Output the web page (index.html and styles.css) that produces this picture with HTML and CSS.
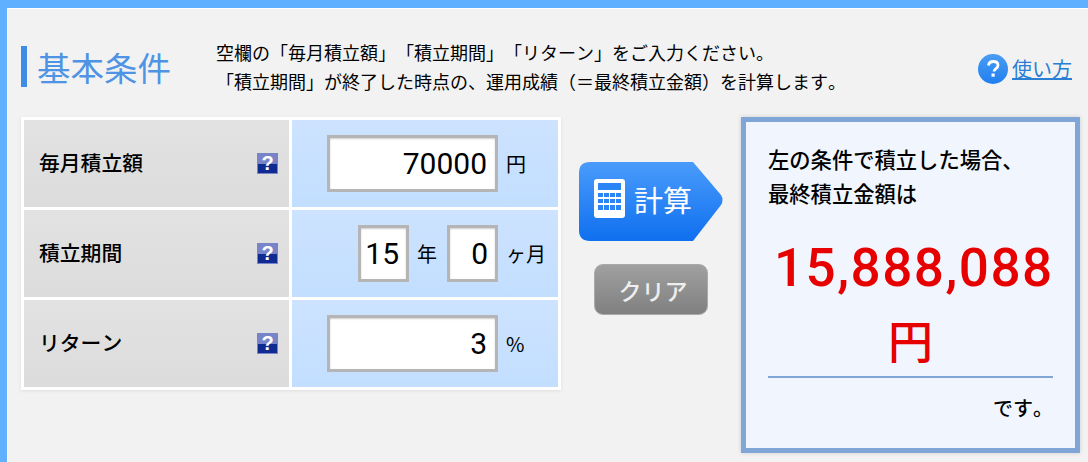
FILE: index.html
```html
<!DOCTYPE html>
<html lang="ja">
<head>
  <meta charset="utf-8">
  <title>基本条件</title>
  <link rel="stylesheet" href="styles.css">
</head>
<body>
  <div class="panel">
    <div class="head">
      <h2 class="title">基本条件</h2>
      <p class="lead">空欄の「毎月積立額」「積立期間」「リターン」をご入力ください。<br>「積立期間」が終了した時点の、運用成績（＝最終積立金額）を計算します。</p>
      <div class="howto">
        <svg class="howto-icon" width="30" height="30" viewBox="0 0 30 30">
          <defs>
            <linearGradient id="howtoBg" x1="0" y1="0" x2="0" y2="1">
              <stop offset="0" stop-color="#4b9cf2"/>
              <stop offset="1" stop-color="#1f7ff0"/>
            </linearGradient>
          </defs>
          <circle cx="15" cy="15" r="15" fill="url(#howtoBg)"/>
          <path d="M10.500 11.500c.3-2.600 2.200-4 4.800-4 2.800 0 4.700 1.500 4.700 3.800 0 1.800-1 2.700-2.300 3.500-1.200.8-1.600 1.300-1.600 2.700" fill="none" stroke="#fff" stroke-width="2.800"/>
          <rect x="13.500" y="19.500" width="3.200" height="3.200" fill="#fff"/>
        </svg>
        <a class="howto-link" href="#">使い方</a>
      </div>
    </div>

    <div class="body">
      <div class="form">
        <div class="row">
          <div class="label"><span>毎月積立額</span><i class="hint">?</i></div>
          <div class="value">
            <input class="field" type="text" value="70000"><span class="unit">円</span>
          </div>
        </div>
        <div class="row">
          <div class="label"><span>積立期間</span><i class="hint">?</i></div>
          <div class="value">
            <input class="field field--small" type="text" value="15"><span class="unit unit--year">年</span>
            <input class="field field--small" type="text" value="0"><span class="unit">ヶ月</span>
          </div>
        </div>
        <div class="row">
          <div class="label"><span>リターン</span><i class="hint">?</i></div>
          <div class="value">
            <input class="field" type="text" value="3"><span class="unit">%</span>
          </div>
        </div>
      </div>

      <div class="actions">
        <svg class="btn-calc" width="144" height="79" viewBox="0 0 144 79">
          <defs>
            <linearGradient id="calcBg" x1="0" y1="0" x2="0" y2="1">
              <stop offset="0" stop-color="#4a9cfb"/>
              <stop offset="1" stop-color="#0f6fef"/>
            </linearGradient>
          </defs>
          <path d="M11 0H114L142 33Q145 38 142 43L114 79H11Q0 79 0 68V11Q0 0 11 0Z" fill="url(#calcBg)"/>
          <rect x="15" y="17" width="31" height="39" rx="3" fill="#fff"/>
          <rect x="19" y="21" width="23" height="7" fill="#2c85f5"/>
          <g fill="#2c85f5">
            <rect x="19" y="31" width="5" height="4"/><rect x="25" y="31" width="5" height="4"/><rect x="31" y="31" width="5" height="4"/><rect x="37" y="31" width="5" height="4"/>
            <rect x="19" y="37" width="5" height="4"/><rect x="25" y="37" width="5" height="4"/><rect x="31" y="37" width="5" height="4"/><rect x="37" y="37" width="5" height="4"/>
            <rect x="19" y="43" width="5" height="5"/><rect x="25" y="43" width="5" height="5"/><rect x="31" y="43" width="5" height="5"/><rect x="37" y="43" width="5" height="5"/>
          </g>
          <text class="btn-calc-text" x="55" y="50">計算</text>
        </svg>
        <button class="btn-clear" type="button">クリア</button>
      </div>

      <div class="result">
        <p class="result-lead">左の条件で積立した場合、<br>最終積立金額は</p>
        <p class="result-amount"><span class="result-num">15,888,088</span><span class="result-yen">円</span></p>
        <p class="result-tail">です。</p>
      </div>
    </div>
  </div>
</body>
</html>
```

FILE: styles.css
```css
* {box-sizing: border-box;}

html, body {
  margin: 0;
  height: 100%;
}

body {
  overflow: hidden;
  background: #5fb0ff;
  padding: 8px 0 0 7px;
  font-family: "Noto Sans CJK JP", sans-serif;
  color: #000;
  text-spacing-trim: space-all;
  font-kerning: none;
}

.panel {
  height: 100%;
  background: #f2f2f2;
  border-top: 1px solid #fff;
  border-left: 1px solid #fff;
  padding: 37px 0 0 13px;
}

/* head */
.head {
  display: flex;
  height: 71px;
}

.title {
  margin: 0;
  width: 195px;
  height: 41px;
  padding-left: 10px;
  border-left: 6px solid #3f8ce6;
  font-size: 33.5px;
  font-weight: 400;
  line-height: 41px;
  color: #4f94e4;
}

.lead {
  margin: -8px 0 0;
  width: 762px;
  font-size: 18px;
  line-height: 29px;
  white-space: nowrap;
}

.howto {
  display: flex;
  align-items: center;
  gap: 4px;
  height: 30px;
  margin-top: 8px;
}

.howto-link {
  font-size: 20px;
  line-height: 30px;
  color: #2a7fd4;
}

/* form table */
.body {
  display: flex;
  align-items: flex-start;
}

.form {
  width: 540px;
  padding: 3px;
  background: #fff;
  display: flex;
  flex-direction: column;
  gap: 3px;
  box-shadow: 0 1px 3px #ddd;
}

.row {
  display: flex;
  gap: 3px;
  height: 87px;
}

.label {
  width: 265px;
  display: flex;
  align-items: center;
  justify-content: space-between;
  padding: 0 11px 0 15px;
  background: linear-gradient(#e2e2e2, #dcdcdc);
  font-size: 20.8px;
  font-weight: 500;
}

.label span {margin-bottom: 3px;}

.hint {
  width: 21px;
  height: 21px;
  background: linear-gradient(#7884c8 55%, #0f2a90 55%);
  border: 1px solid #7884c8;
  color: #fff;
  font: bold 20px/19px "Liberation Sans", sans-serif;
  text-align: center;
}

.value {
  flex: 1;
  display: flex;
  align-items: center;
  justify-content: flex-end;
  padding-right: 12px;
  background: linear-gradient(#cde3ff, #c2deff);
}

.field {
  width: 171px;
  height: 57px;
  border: 3px solid #b5b5b5;
  padding: 0 8px;
  background: #fff;
  box-shadow: inset 0 1px 2px #ccc;
  font-family: Roboto, sans-serif;
  font-size: 30px;
  text-align: right;
  color: #000;
  outline: none;
}

.field--small {
  width: 51px;
  padding: 0 7px 0 2px;
}

.unit {
  width: 48px;
  padding-left: 8px;
  font-size: 20px;
  white-space: nowrap;
}

.unit--year {width: 38px;}

/* buttons */
.actions {
  width: 180px;
  padding: 45px 0 0 18px;
  display: flex;
  flex-direction: column;
  gap: 23px;
}

.btn-calc-text {
  font-family: "Noto Sans CJK JP", sans-serif;
  font-size: 29px;
  fill: #fff;
}

.btn-clear {
  width: 114px;
  height: 51px;
  margin-left: 15px;
  padding: 0 0 0 4px;
  border: 1px solid #aaa;
  border-radius: 9px;
  background: linear-gradient(#a0a0a0, #808080);
  font-family: "Noto Sans CJK JP", sans-serif;
  font-size: 23px;
  font-weight: 500;
  color: #eee;
}

/* result */
.result {
  width: 339px;
  height: 336px;
  border: 5px solid #7fa6d6;
  background: #f0f5fe;
  padding: 20px 22px 0;
  box-shadow: 0 0 4px #ccc;
}

.result p {margin: 0;}

.result-lead {
  font-size: 21.3px;
  font-weight: 500;
  line-height: 34px;
  white-space: nowrap;
}

.result .result-amount {
  margin-top: 22px;
  border-bottom: 2px solid #7fa6d6;
  text-align: center;
  color: #e60000;
}

.result-num, .result-yen {
  display: block;
  height: 72px;
  line-height: 72px;
}

.result-num {
  padding-left: 6px;
  font-family: Roboto, sans-serif;
  font-size: 53px;
  font-weight: 500;
  letter-spacing: 1.5px;
  white-space: nowrap;
}

.result-yen {
  font-size: 45px;
  font-weight: 500;
}

.result .result-tail {
  margin-top: 15px;
  font-size: 20px;
  font-weight: 500;
  line-height: 30px;
  text-align: right;
}
```
